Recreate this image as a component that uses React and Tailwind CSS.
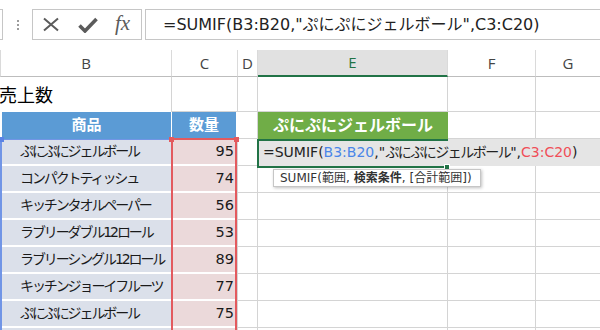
const rows = [
  ["ぷにぷにジェルボール", 95],
  ["コンパクトティッシュ", 74],
  ["キッチンタオルペーパー", 56],
  ["ラブリーダブル12ロール", 53],
  ["ラブリーシングル12ロール", 89],
  ["キッチンジョーイフルーツ", 77],
  ["ぷにぷにジェルボール", 75],
  ["", ""],
];

const GRID = "grid grid-cols-[172px_66px_20px_190px_88px_1fr]";
const XL = "font-['DejaVu_Sans','Noto_Sans_CJK_JP',sans-serif]";

function Cell({ className = "" }) {
  return <div className={"border-r border-b border-[#d4d4d4] " + className} />;
}

export default function App() {
  return (
    <div className={"relative w-[600px] h-[330px] overflow-hidden bg-white text-[#1a1a1a] " + XL}>
      {/* formula bar */}
      <div className="h-[50px] flex items-start pt-[9px]">
        <div className="w-[3px] h-[31px] border-y border-r border-[#c6c6c6]" />
        <div className="w-[29px] h-[31px] flex flex-col items-center justify-center gap-[2px]">
          <div className="w-[2px] h-[2px] bg-[#9c9c9c]" />
          <div className="w-[2px] h-[2px] bg-[#9c9c9c]" />
          <div className="w-[2px] h-[2px] bg-[#9c9c9c]" />
        </div>
        <div className="w-[110px] h-[31px] border border-[#c6c6c6] flex items-center">
          <svg className="ml-[9px]" width="18" height="15" viewBox="0 0 18 15">
            <path d="M2 1.5 L16 13.5 M16 1.5 L2 13.5" stroke="#5b5b5b" strokeWidth="2" fill="none" />
          </svg>
          <svg className="ml-[18px]" width="20" height="16" viewBox="0 0 20 16">
            <path d="M1.5 8.5 L7 14 L18.5 2" stroke="#5b5b5b" strokeWidth="3.6" fill="none" />
          </svg>
          <span className="ml-[17px] font-['Liberation_Serif',serif] italic text-[21px] leading-none text-[#5b5b5b] -mt-[2px]">fx</span>
        </div>
        <div className="w-[3px]" />
        <div className="flex-1 h-[31px] border border-r-0 border-[#c6c6c6] flex items-center pl-[17px] text-[16px] whitespace-nowrap text-[#222]">
          =SUMIF(B3:B20,"ぷにぷにジェルボール",C3:C20)
        </div>
      </div>

      {/* column headers */}
      <div className={GRID + " h-[27px] font-['Open_Sans',sans-serif] text-[15px] text-[#444]"}>
        <div className="border-l border-r border-r-[#dadada] border-l-[#dadada] border-b border-b-[#bdbdbd] flex items-center justify-center">B</div>
        <div className="border-r border-r-[#dadada] border-b border-b-[#bdbdbd] flex items-center justify-center">C</div>
        <div className="border-r border-r-[#dadada] border-b border-b-[#bdbdbd] flex items-center justify-center">D</div>
        <div className="bg-[#e1e1e1] text-[#217346] border-r border-r-[#dadada] border-b-2 border-b-[#217346] flex items-center justify-center">E</div>
        <div className="border-r border-r-[#dadada] border-b border-b-[#bdbdbd] flex items-center justify-center">F</div>
        <div className="border-b border-b-[#bdbdbd] flex items-center justify-center">G</div>
      </div>

      {/* title row */}
      <div className={GRID + " h-[35px]"}>
        <div className="border-r border-[#d4d4d4] flex items-center overflow-visible">
          <span className="-ml-[1px] text-[18px] font-['Noto_Sans_CJK_JP',sans-serif] whitespace-nowrap text-black">売上数</span>
        </div>
        <Cell />
        <Cell />
        <Cell />
        <Cell />
        <div className="border-b border-[#d4d4d4]" />
      </div>

      {/* table header row */}
      <div className={GRID + " h-[27px]"}>
        <div className="pl-[2px] pr-[1px]">
          <div className="h-full bg-[#5b9bd5] text-white font-bold text-[15px] flex items-center justify-center">商品</div>
        </div>
        <div className="pr-[2px]">
          <div className="h-full bg-[#5b9bd5] text-white font-bold text-[15px] flex items-center justify-center">数量</div>
        </div>
        <Cell />
        <div className="bg-[#70ad47] text-white font-bold text-[16px] flex items-center justify-center whitespace-nowrap">
          ぷにぷにジェルボール
        </div>
        <Cell />
        <div className="border-b border-[#d4d4d4]" />
      </div>

      {/* data rows */}
      {rows.map(([name, qty], i) => (
        <div key={i} className={GRID + " h-[27px]"}>
          <div className="pl-[2px] pr-[1px]">
            <div className="h-full bg-[#dbe0ea] border-b-2 border-white flex items-center pl-[18px] text-[14px] tracking-[-2.1px] whitespace-nowrap">
              {name}
            </div>
          </div>
          <div className="pr-[2px] border-r border-[#d4d4d4]">
            <div className="h-full bg-[#ebd9da] border-b-2 border-white flex items-center justify-end pr-[1px] text-[14.5px]">
              {qty}
            </div>
          </div>
          <Cell />
          {i === 0 ? (
            <div className="col-span-3 bg-[#e5e5e5] flex items-center pl-[5px] text-[14px] font-normal whitespace-nowrap text-[#222]">
              =SUMIF(<span className="text-[#4a86e8]">B3:B20</span>,"<span className="tracking-[-1.5px]">ぷにぷにジェルボール</span>",<span className="text-[#f04e58]">C3:C20</span>)
            </div>
          ) : (
            <>
              <Cell />
              <Cell />
              <div className="border-b border-[#d4d4d4]" />
            </>
          )}
        </div>
      ))}

      {/* blue range highlight */}
      <div className="absolute left-0 top-[139px] w-[171px] h-[200px] border-l-2 border-t border-[#7195e6]" />
      <div className="absolute left-[-1px] top-[137px] w-[5px] h-[5px] bg-[#5b84e4]" />

      {/* red range highlight */}
      <div className="absolute left-[171px] top-[138px] w-[66px] h-[200px] border-2 border-[#e35a5e]" />
      <div className="absolute left-[169px] top-[137px] w-[5px] h-[5px] bg-[#e35a5e]" />
      <div className="absolute left-[234px] top-[137px] w-[5px] h-[5px] bg-[#e35a5e]" />

      {/* active cell border */}
      <div className="absolute left-[257px] top-[139px] w-[191px] h-[29px] border-2 border-r-0 border-[#217346]" />
      <div className="absolute left-[444px] top-[164px] w-[6px] h-[6px] bg-[#217346] border border-white" />

      {/* tooltip */}
      <div className="absolute left-[273px] top-[169px] w-[208px] h-[18px] bg-white border border-[#c6c6c6] shadow-[1px_1px_3px_rgba(0,0,0,0.25)] flex items-center pl-[6px] text-[12px] text-[#333] whitespace-nowrap">
        SUMIF(範囲,<span className="ml-[4px] font-bold">検索条件</span>,<span className="ml-[4px]">[合計範囲])</span>
      </div>
    </div>
  );
}
